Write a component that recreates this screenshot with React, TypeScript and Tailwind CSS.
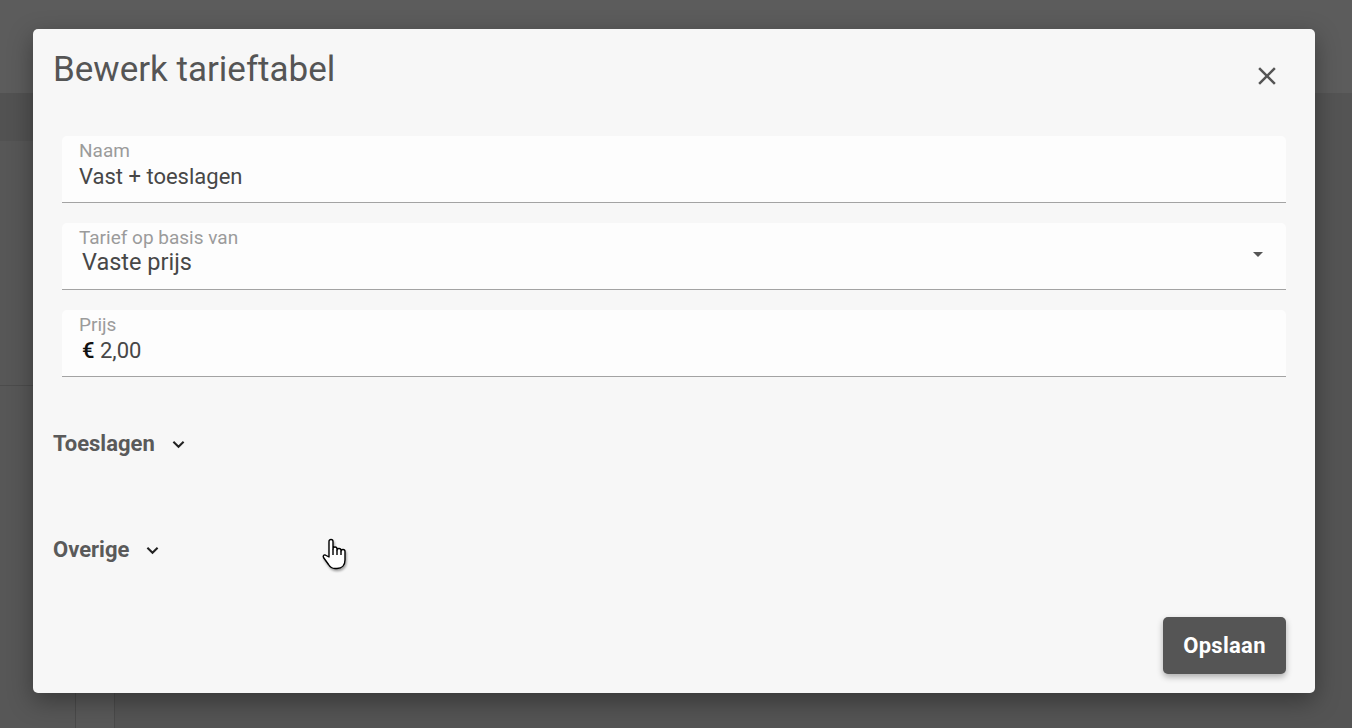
export default function App() {
  return (
    <div className="relative w-[1352px] h-[728px] overflow-hidden bg-[#555555] font-['Roboto',sans-serif]">
      <PageBehind />
      <Dialog />
    </div>
  );
}

function PageBehind() {
  return (
    <div className="flex flex-col h-full">
      <div className="h-[93px] bg-[#5c5c5c]" />
      <div className="flex flex-1">
        <div className="w-[75px] flex flex-col">
          <div className="h-[48px] bg-[#525252]" />
          <div className="h-[245px] bg-[#575757] border-b border-[#4c4c4c]" />
          <div className="flex-1 bg-[#575757]" />
        </div>
        <div className="w-[40px] bg-[#585858] border-x border-[#4a4a4a]" />
        <div className="flex-1 bg-[#545454]" />
      </div>
    </div>
  );
}

function Dialog() {
  return (
    <div className="absolute left-[33px] top-[29px] w-[1282px] h-[664px] rounded-[5px] bg-[#f7f7f7] shadow-[0_8px_24px_rgba(0,0,0,0.35)] flex flex-col">
      <div className="flex items-start justify-between pl-5 pr-[33px] pt-[21px]">
        <h2 className="text-[35px] leading-[40px] text-[#555555]">Bewerk tarieftabel</h2>
        <button className="mt-[11px] w-[30px] h-[30px] text-[#555555]">
          <svg viewBox="0 0 24 24" className="w-full h-full" fill="currentColor">
            <path d="M19 6.41L17.59 5 12 10.59 6.41 5 5 6.41 10.59 12 5 17.59 6.41 19 12 13.41 17.59 19 19 17.59 13.41 12z" />
          </svg>
        </button>
      </div>

      <div className="mt-[45px] px-[29px] flex flex-col gap-5">
        <Field label="Naam">
          <span className="text-[22px]">Vast + toeslagen</span>
        </Field>
        <Field label="Tarief op basis van" select>
          <span className="relative -top-[2px] pl-[3px] text-[23.5px]">Vaste prijs</span>
        </Field>
        <Field label="Prijs">
          <span className="pl-[3px] text-[22px]">
            <span className="text-[#111111] font-medium">€</span> 2,00
          </span>
        </Field>
      </div>

      <Section title="Toeslagen" className="mt-[53px]" />
      <Section title="Overige" className="mt-[78px]" />

      <div className="mt-auto flex justify-end px-[29px] pb-[19px]">
        <button className="w-[123px] h-[57px] rounded-[5px] bg-[#555555] text-white text-[22px] font-bold tracking-[0.3px] shadow-[0_3px_6px_rgba(0,0,0,0.3)]">
          Opslaan
        </button>
      </div>

      <Pointer />
    </div>
  );
}

function Field({
  label,
  select,
  children,
}: {
  label: string;
  select?: boolean;
  children: React.ReactNode;
}) {
  return (
    <div className="h-[67px] flex items-start bg-[#fdfdfd] rounded-t-[5px] border-b border-[#a3a3a3] pt-[4px] pl-[17px]">
      <div className="flex-1 flex flex-col">
        <span className="text-[19px] leading-[22px] text-[#9b9b9b]">{label}</span>
        <span className="mt-[1px] leading-[28px] text-[#474747]">{children}</span>
      </div>
      {select && (
        <div className="mt-[25px] mr-[23px] w-0 h-0 border-x-[5px] border-x-transparent border-t-[5px] border-t-[#555555]" />
      )}
    </div>
  );
}

function Section({ title, className }: { title: string; className: string }) {
  return (
    <div className={`flex items-center gap-[17px] pl-5 ${className}`}>
      <span className="text-[22px] leading-[28px] font-bold text-[#5a5a5a]">{title}</span>
      <svg viewBox="0 0 14 9" className="w-[13px] h-[9px]" fill="none" stroke="#222222" strokeWidth="2.2">
        <path d="M1.5 1.5l5.5 5.5 5.5-5.5" />
      </svg>
    </div>
  );
}

function Pointer() {
  return (
    <svg
      viewBox="0 0 24 32"
      className="absolute left-[289px] top-[509px] w-[24px] h-[32px] drop-shadow-[1px_2px_1px_rgba(0,0,0,0.35)]"
      fill="white"
      stroke="black"
      strokeWidth="1.4"
      strokeLinejoin="round"
    >
      <path d="M7 14V3.5a2 2 0 0 1 4 0V11a2 2 0 0 1 4 0v1.5a2 2 0 0 1 4 0v1a2 2 0 0 1 4 0V22c0 5-3 8.5-8 8.5h-2c-3 0-5-1.5-6.5-4L1.5 19.5c-.8-1.3.2-3 1.7-2.5L7 19Z" />
      <path d="M11 11v6M15 12.5v4.5M19 13.5v3.5" fill="none" />
    </svg>
  );
}
